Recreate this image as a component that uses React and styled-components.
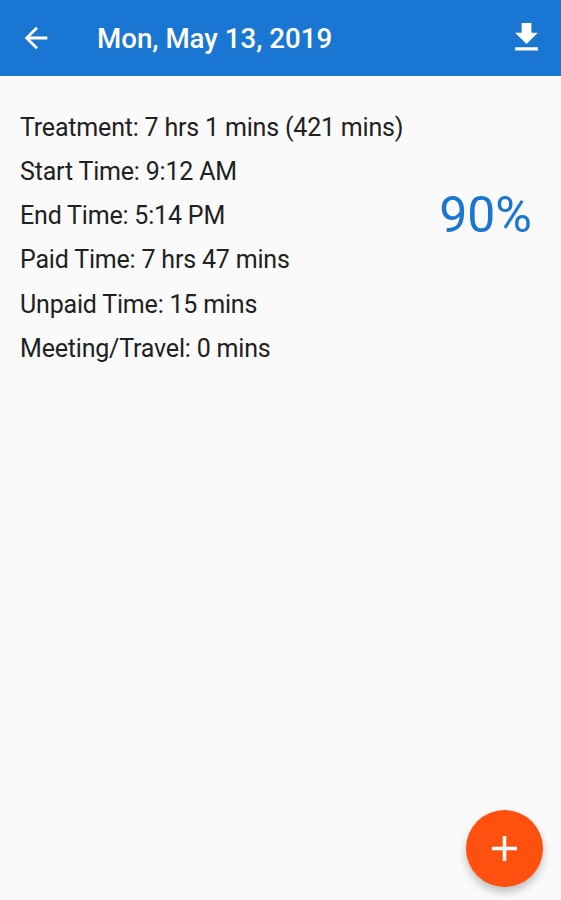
import React from 'react'
import styled, { createGlobalStyle } from 'styled-components'
import { MdArrowBack, MdFileDownload, MdAdd } from 'react-icons/md'

const GlobalStyle = createGlobalStyle`
  * { box-sizing: border-box; }
  body {
    margin: 0;
    background: #fafafa;
    font-family: Roboto, sans-serif;
  }
`

const Screen = styled.div`
  position: relative;
  display: flex;
  flex-direction: column;
  height: 900px;
  overflow: hidden;
`

const AppBar = styled.header`
  display: flex;
  align-items: center;
  height: 76px;
  padding: 0 15px 0 19px;
  background: #1976d2;
  color: #fff;
`

const IconButton = styled.button`
  display: flex;
  padding: 0 0 1px;
  border: 0;
  background: none;
  color: inherit;
  font-size: ${props => props.$size}px;
`

const Title = styled.h1`
  flex: 1;
  margin: 0 0 0 44px;
  padding-top: 2px;
  font-size: 27.7px;
  font-weight: 500;
  line-height: 32px;
  white-space: nowrap;
`

const Content = styled.main`
  display: flex;
  justify-content: space-between;
  align-items: flex-start;
  padding: 30px 29px 0 20px;
`

const Details = styled.ul`
  margin: 0;
  padding: 0;
  list-style: none;
`

const Detail = styled.li`
  height: 44.15px;
  color: #212121;
  font-size: 25px;
  letter-spacing: -0.19px;
  line-height: 44px;
  white-space: nowrap;
`

const Percent = styled.div`
  margin-top: 81px;
  color: #1976d2;
  font-size: 50px;
  line-height: 56px;
`

const Fab = styled.button`
  position: absolute;
  right: 18px;
  bottom: 13px;
  display: flex;
  align-items: center;
  justify-content: center;
  width: 77px;
  height: 77px;
  padding: 0;
  border: 0;
  border-radius: 50%;
  background: #ff500f;
  color: #fff;
  font-size: 43px;
  box-shadow: 0 5px 8px rgba(0, 0, 0, 0.24);
`

const details = [
  'Treatment: 7 hrs 1 mins (421 mins)',
  'Start Time: 9:12 AM',
  'End Time: 5:14 PM',
  'Paid Time: 7 hrs 47 mins',
  'Unpaid Time: 15 mins',
  'Meeting/Travel: 0 mins',
]

const App = () => (
  <Screen>
    <GlobalStyle />
    <AppBar>
      <IconButton $size={34} aria-label="Back"><MdArrowBack /></IconButton>
      <Title>Mon, May 13, 2019</Title>
      <IconButton $size={39} aria-label="Download"><MdFileDownload /></IconButton>
    </AppBar>
    <Content>
      <Details>
        {details.map(text => <Detail key={text}>{text}</Detail>)}
      </Details>
      <Percent>90%</Percent>
    </Content>
    <Fab aria-label="Add"><MdAdd /></Fab>
  </Screen>
)

export default App
